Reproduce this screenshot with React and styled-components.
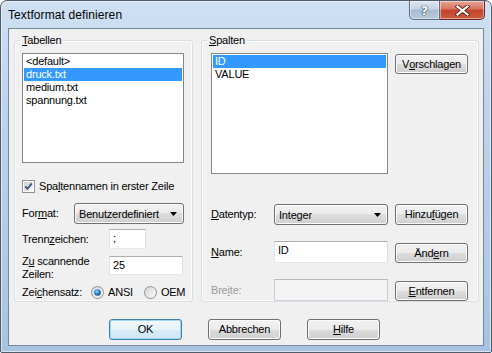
import React from 'react';
import styled, { createGlobalStyle } from 'styled-components';

const Global = createGlobalStyle`
  html, body {
    margin: 0;
    padding: 0;
    overflow: hidden;
    background: #ffffff;
  }
  body {
    font-family: "Liberation Sans", Arial, sans-serif;
    font-size: 11px;
    letter-spacing: -0.2px;
    color: #000;
  }
`

const Window = styled.div`
  box-sizing: border-box;
  width: 492px;
  height: 353px;
  border: 1px solid #4f5b68;
  border-radius: 7px 7px 2px 2px;
  padding: 0 7px 6px 7px;
  display: flex;
  flex-direction: column;
  background: linear-gradient(180deg, #cfe0f3 0%, #bed4ec 30%, #b3cbe7 70%, #a8c2e2 100%);
  box-shadow: inset 0 0 0 1px rgba(255, 255, 255, 0.55);
`

const TitleBar = styled.div`
  height: 27px;
  display: flex;
  justify-content: space-between;
  align-items: flex-start;
`

const Title = styled.div`
  padding-top: 7px;
  font-size: 12px;
  line-height: 14px;
  letter-spacing: 0.1px;
  color: #000;
`

const CaptionButtons = styled.div`
  display: flex;
  margin-right: -1px;
`

const CaptionButton = styled.div`
  box-sizing: border-box;
  width: ${({ w }) => w}px;
  height: 19px;
  display: flex;
  align-items: center;
  justify-content: center;
  border: 1px solid ${({ close }) => (close ? '#6b2a23' : '#5f6d7c')};
  border-top: none;
  border-radius: ${({ close }) => (close ? '0 0 5px 0' : '0 0 0 5px')};
  border-left: ${({ close }) => (close ? 'none' : undefined)};
  background: ${({ close }) =>
    close
      ? 'linear-gradient(180deg, #e8a493 0%, #d8735f 45%, #c1432f 50%, #cc5b3e 100%)'
      : 'linear-gradient(180deg, #dce6f1 0%, #c4d3e3 45%, #a9bbd0 50%, #b9cadc 100%)'};
  box-shadow: inset 0 0 0 1px rgba(255, 255, 255, 0.45);
`

const HelpGlyph = styled.span`
  font-family: "DejaVu Sans", sans-serif;
  font-weight: bold;
  font-size: 13px;
  line-height: 13px;
  color: #fff;
  text-shadow: 0 0 1px #2b3642, 0 0 1px #2b3642, 0 0 1px #2b3642;
`

const Client = styled.div`
  flex: 1;
  box-sizing: border-box;
  border: 1px solid #77879a;
  background: #f0f0f0;
  padding: 5px 4px 0 5px;
  display: flex;
  flex-direction: column;
`

const Groups = styled.div`
  display: flex;
  gap: 8px;
  height: 268px;
`

const Group = styled.fieldset`
  box-sizing: border-box;
  margin: 0;
  width: ${({ w }) => w}px;
  padding: 6px 6px 0 ${({ pl }) => pl}px;
  border: 1px solid #d5dfe5;
  border-radius: 3px;
  box-shadow: inset 0 0 0 1px #fcfcfc;
  display: flex;
  flex-direction: column;
`

const Legend = styled.legend`
  padding: 0 2px;
  margin-left: ${({ ml }) => ml}px;
  font-size: 11px;
  line-height: 13px;
`

const Mn = styled.span`
  text-decoration: underline;
  text-underline-offset: 1px;
`

const ListBox = styled.div`
  box-sizing: border-box;
  width: ${({ w }) => w}px;
  height: ${({ h }) => h}px;
  border: 1px solid #828790;
  background: #fff;
  padding: 1px;
  flex-shrink: 0;
`

const ListItem = styled.div`
  height: 13px;
  line-height: 13px;
  padding-left: 2px;
  white-space: nowrap;
  background: ${({ selected }) => (selected ? '#3399ff' : 'transparent')};
  color: ${({ selected }) => (selected ? '#fff' : '#000')};
`

const Row = styled.div`
  display: flex;
  align-items: ${({ align }) => align || 'center'};
  margin-top: ${({ mt }) => mt || 0}px;
  height: ${({ h }) => (h ? `${h}px` : 'auto')};
`

const Label = styled.div`
  width: ${({ w }) => (w ? `${w}px` : 'auto')};
  flex-shrink: 0;
  line-height: 13px;
  color: ${({ disabled }) => (disabled ? '#9b9b9b' : '#000')};
  white-space: ${({ wrap }) => (wrap ? 'normal' : 'nowrap')};
`

const Button = styled.div`
  box-sizing: border-box;
  width: 73px;
  height: ${({ h }) => h || 21}px;
  margin-left: ${({ ml }) => ml || 0}px;
  margin-top: ${({ mt }) => mt || 0}px;
  display: flex;
  align-items: center;
  justify-content: center;
  flex-shrink: 0;
  border: 1px solid ${({ primary }) => (primary ? '#3c7fb1' : '#707070')};
  border-radius: 3px;
  background: ${({ primary }) =>
    primary
      ? 'linear-gradient(180deg, #f1f8fd 0%, #e8f3fa 50%, #d9ecf7 50%, #cfe6f4 100%)'
      : 'linear-gradient(180deg, #f2f2f2 0%, #ebebeb 50%, #dddddd 50%, #cfcfcf 100%)'};
  box-shadow: inset 0 0 0 1px ${({ primary }) => (primary ? '#9fd9f5' : '#fbfbfb')};
  line-height: 13px;
`

const Combo = styled.div`
  box-sizing: border-box;
  width: ${({ w }) => w}px;
  height: 21px;
  display: flex;
  align-items: center;
  justify-content: space-between;
  padding: 0 6px 0 4px;
  border: 1px solid #707070;
  border-radius: 3px;
  background: linear-gradient(180deg, #f2f2f2 0%, #ebebeb 50%, #dddddd 50%, #cfcfcf 100%);
  box-shadow: inset 0 0 0 1px #fbfbfb;
  flex-shrink: 0;
`

const TextBox = styled.div`
  box-sizing: border-box;
  width: ${({ w }) => w}px;
  height: ${({ h }) => h}px;
  margin-top: ${({ mt }) => mt || 0}px;
  padding: ${({ pt }) => pt || 2}px 3px 0;
  border: 1px solid #abadb3;
  border-color: ${({ disabled }) =>
    disabled ? '#b5b8bc #c9ccd0 #cfd3d7 #c9ccd0' : '#abadb3 #dbdfe6 #e3e9ef #e2e3ea'};
  background: ${({ disabled }) => (disabled ? '#f4f4f4' : '#fff')};
  line-height: 13px;
  flex-shrink: 0;
`

const RadioLabel = styled.span`
  margin-left: 4px;
  margin-right: ${({ mr }) => mr || 0}px;
  line-height: 13px;
`

const BottomBar = styled.div`
  display: flex;
  gap: 26px;
  margin-top: 17px;
  padding-left: 95px;
`

function Arrow() {
  return (
    <svg width="7" height="4" viewBox="0 0 7 4">
      <polygon points="0,0 7,0 3.5,4" fill="#000" />
    </svg>
  );
}

function CheckBox() {
  return (
    <svg width="13" height="13" viewBox="0 0 13 13">
      <defs>
        <linearGradient id="cbg" x1="0" y1="0" x2="1" y2="1">
          <stop offset="0" stopColor="#cbcfd5" />
          <stop offset="1" stopColor="#f6f6f6" />
        </linearGradient>
      </defs>
      <rect x="0.5" y="0.5" width="12" height="12" fill="#fff" stroke="#8e8f8f" />
      <rect x="2" y="2" width="9" height="9" fill="url(#cbg)" />
      <path d="M3.3 6.4 L5.4 8.8 L9.8 3.4" fill="none" stroke="#3d5287" strokeWidth="1.8" />
    </svg>
  );
}

function Radio({ checked }) {
  return (
    <svg width="13" height="13" viewBox="0 0 13 13">
      <defs>
        <linearGradient id="rbg" x1="0" y1="0" x2="1" y2="1">
          <stop offset="0" stopColor="#d2d4d6" />
          <stop offset="1" stopColor="#fbfbfb" />
        </linearGradient>
        <radialGradient id="rdot" cx="0.4" cy="0.35" r="0.7">
          <stop offset="0" stopColor="#9ad9fb" />
          <stop offset="0.5" stopColor="#2a86cf" />
          <stop offset="1" stopColor="#124d86" />
        </radialGradient>
      </defs>
      <circle cx="6.5" cy="6.5" r="6" fill="url(#rbg)" stroke="#8e8f8f" />
      {checked && <circle cx="6.5" cy="6.5" r="3.3" fill="url(#rdot)" />}
    </svg>
  );
}

function CloseGlyph() {
  return (
    <svg width="15" height="11" viewBox="0 0 15 11">
      <path d="M2.5 1.5 L12.5 9.5 M12.5 1.5 L2.5 9.5" stroke="#5b1c14" strokeWidth="4" strokeLinecap="square" />
      <path d="M2.5 1.5 L12.5 9.5 M12.5 1.5 L2.5 9.5" stroke="#fff" strokeWidth="2.2" strokeLinecap="square" />
    </svg>
  );
}

export default function App() {
  return (
    <>
      <Global />
      <Window>
        <TitleBar>
          <Title>Textformat definieren</Title>
          <CaptionButtons>
            <CaptionButton w={31}>
              <HelpGlyph>?</HelpGlyph>
            </CaptionButton>
            <CaptionButton w={45} close>
              <CloseGlyph />
            </CaptionButton>
          </CaptionButtons>
        </TitleBar>
        <Client>
          <Groups>
            <Group w={179} pl={7}>
              <Legend ml={-2}><Mn>T</Mn>abellen</Legend>
              <ListBox w={162} h={110}>
                <ListItem>&lt;default&gt;</ListItem>
                <ListItem selected>druck.txt</ListItem>
                <ListItem>medium.txt</ListItem>
                <ListItem>spannung.txt</ListItem>
              </ListBox>
              <Row mt={17} h={13}>
                <CheckBox />
                <RadioLabel>Spa<Mn>l</Mn>tennamen in erster Zeile</RadioLabel>
              </Row>
              <Row mt={10} h={21}>
                <Label w={52}>For<Mn>m</Mn>at:</Label>
                <Combo w={110}>
                  <span>Benutzerdefiniert</span>
                  <Arrow />
                </Combo>
              </Row>
              <Row mt={5} h={20}>
                <Label w={87}>Trenn<Mn>z</Mn>eichen:</Label>
                <TextBox w={37} h={20}>;</TextBox>
              </Row>
              <Row mt={6} h={26} align="flex-start">
                <Label w={87} wrap>Z<Mn>u</Mn> scannende<br />Zeilen:</Label>
                <TextBox w={74} h={19} mt={1} pt={2}>25</TextBox>
              </Row>
              <Row mt={5} h={13}>
                <Label w={69}>Zei<Mn>c</Mn>hensatz:</Label>
                <Radio checked />
                <RadioLabel mr={11}>ANSI</RadioLabel>
                <Radio />
                <RadioLabel>OEM</RadioLabel>
              </Row>
            </Group>
            <Group w={278} pl={9}>
              <Legend ml={-4}><Mn>S</Mn>palten</Legend>
              <Row align="flex-start">
                <ListBox w={177} h={121}>
                  <ListItem selected>ID</ListItem>
                  <ListItem>VALUE</ListItem>
                </ListBox>
                <Button ml={7} mt={1} h={20}>V<Mn>o</Mn>rschlagen</Button>
              </Row>
              <Row mt={30} h={21}>
                <Label w={63}><Mn>D</Mn>atentyp:</Label>
                <Combo w={114}>
                  <span>Integer</span>
                  <Arrow />
                </Combo>
                <Button ml={7}>Hinzu<Mn>f</Mn>ügen</Button>
              </Row>
              <Row mt={16} h={22}>
                <Label w={63}><Mn>N</Mn>ame:</Label>
                <TextBox w={114} h={22}>ID</TextBox>
                <Button ml={7} h={20} mt={2}>Änd<Mn>e</Mn>rn</Button>
              </Row>
              <Row mt={16} h={22}>
                <Label w={63} disabled>Bre<Mn>i</Mn>te:</Label>
                <TextBox w={114} h={22} disabled />
                <Button ml={7} h={20} mt={2}><Mn>E</Mn>ntfernen</Button>
              </Row>
            </Group>
          </Groups>
          <BottomBar>
            <Button primary>OK</Button>
            <Button>Abbrechen</Button>
            <Button><Mn>H</Mn>ilfe</Button>
          </BottomBar>
        </Client>
      </Window>
    </>
  );
}
